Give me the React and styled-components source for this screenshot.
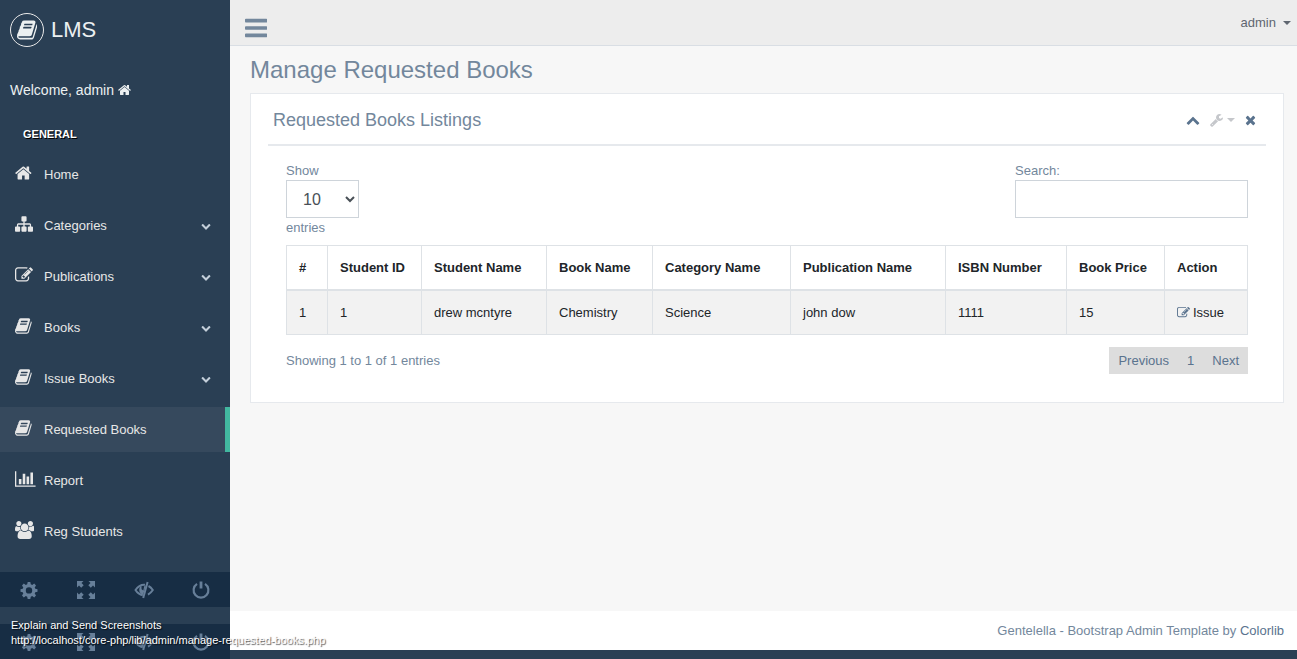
import React from "react";
import styled, { createGlobalStyle, css } from "styled-components";

const color = {
  navy: "#2a3f54",
  navyDark: "#172d44",
  slate: "#73879c",
  link: "#5a738e",
  light: "#ecf0f1",
  line: "#dee2e6",
};

const GlobalStyle = createGlobalStyle`
  *, *::before, *::after { box-sizing: border-box; }
  body {
    margin: 0;
    background: ${color.navy};
    color: ${color.slate};
    font-family: "Liberation Sans", Arial, sans-serif;
    font-size: 13px;
    line-height: 20px;
  }
  a { color: inherit; text-decoration: none; }
  button, input, select { font: inherit; color: inherit; }
  h1, h2, h3, p, ul { margin: 0; padding: 0; font-weight: 400; }
`;

const ICONS = {
  home: ["64 0 1664 1792", "M1472 992v480q0 26-19 45t-45 19h-384v-384h-256v384h-384q-26 0-45-19t-19-45v-480q0-1 .5-3t.5-3l575-474 575 474q1 2 1 6zm223-69l-62 74q-8 9-21 11h-3q-13 0-21-7l-692-577-692 577q-12 8-24 7-13-2-21-11l-62-74q-8-10-7-23.5t11-21.5l719-599q32-26 76-26t76 26l244 204v-195q0-14 9-23t23-9h192q14 0 23 9t9 23v408l219 182q10 8 11 21.5t-7 23.5z"],
  book: ["64 0 1664 1792", "M1703 478q40 57 18 129l-275 906q-19 64-76.5 107.5t-122.5 43.5h-923q-77 0-148.5-53.5t-99.5-131.5q-24-67-2-127 0-4 3-27t4-37q1-8-3-21.5t-3-19.5q2-11 8-21t16.5-23.5 16.5-23.5q23-38 45-91.5t30-91.5q3-10 .5-30t-.5-28q3-11 17-28t17-23q21-36 42-92t25-90q1-9-2.5-32t.5-28q4-13 22-30.5t22-22.5q19-26 42.5-84.5t27.5-96.5q1-8-3-25.5t-2-26.5q2-8 9-18t18-23 17-21q8-12 16.5-30.5t15-35 16-36 19.5-32 26.5-23.5 36-11.5 47.5 5.5l-1 3q38-9 51-9h761q74 0 114 56t18 130l-274 906q-36 119-71.5 153.5t-128.5 34.5h-869q-27 0-38 15-11 16-1 43 24 70 144 70h923q29 0 56-15.5t35-41.5l300-987q7-22 5-57 38 15 59 43zm-1064 2q-4 13 2 22.5t20 9.5h608q13 0 25.5-9.5t16.5-22.5l21-64q4-13-2-22.5t-20-9.5h-608q-13 0-25.5 9.5t-16.5 22.5zm-83 256q-4 13 2 22.5t20 9.5h608q13 0 25.5-9.5t16.5-22.5l21-64q4-13-2-22.5t-20-9.5h-608q-13 0-25.5 9.5t-16.5 22.5z"],
  edit: ["0 0 1792 1792", "M888 1184l116-116-152-152-116 116v56h96v96h56zm440-720q-16-16-33 1l-350 350q-17 17-1 33t33-1l350-350q17-17 1-33zm80 594v190q0 119-84.5 203.5t-203.5 84.5h-832q-119 0-203.5-84.5t-84.5-203.5v-832q0-119 84.5-203.5t203.5-84.5h832q63 0 117 25 15 7 18 23 3 17-9 29l-49 49q-14 14-32 8-23-6-45-6h-832q-66 0-113 47t-47 113v832q0 66 47 113t113 47h832q66 0 113-47t47-113v-126q0-13 9-22l64-64q15-15 35-7t20 29zm-96-738l288 288-672 672h-288v-288zm444 132l-92 92-288-288 92-92q28-28 68-28t68 28l152 152q28 28 28 68t-28 68z"],
  sitemap: ["0 0 1792 1792", "M1792 1248v320q0 40-28 68t-68 28h-320q-40 0-68-28t-28-68v-320q0-40 28-68t68-28h96v-192h-512v192h96q40 0 68 28t28 68v320q0 40-28 68t-68 28h-320q-40 0-68-28t-28-68v-320q0-40 28-68t68-28h96v-192h-512v192h96q40 0 68 28t28 68v320q0 40-28 68t-68 28h-320q-40 0-68-28t-28-68v-320q0-40 28-68t68-28h96v-192q0-52 38-90t90-38h512v-192h-96q-40 0-68-28t-28-68v-320q0-40 28-68t68-28h320q40 0 68 28t28 68v320q0 40-28 68t-68 28h-96v192h512q52 0 90 38t38 90v192h96q40 0 68 28t28 68z"],
  chart: ["0 0 2048 1792", "M640 896v512h-256v-512h256zm384-512v1024h-256v-1024h256zm1024 1152v128h-2048v-1536h128v1408h1920zm-640-896v768h-256v-768h256zm384-384v1152h-256v-1152h256z"],
  users: ["-64 0 1920 1792", "M529 896q-162 5-265 128h-134q-82 0-138-40.5t-56-118.5q0-353 124-353 6 0 43.5 21t97.5 42.5 119 21.5q67 0 133-23-5 37-5 66 0 159 90 290zm1071 637q0 120-73 189.5t-194 69.5h-874q-121 0-194-69.5t-73-189.5q0-53 3.5-103.5t14-109 26.5-108.5 43-97.5 62-81 85.5-53.5 111.5-20q10 0 43 21.5t73 48 107 48 135 21.5 135-21.5 107-48 73-48 43-21.5q61 0 111.5 20t85.5 53.5 62 81 43 97.5 26.5 108.5 14 109 3.5 103.5zm-1024-1277q0 106-75 181t-181 75-181-75-75-181 75-181 181-75 181 75 75 181zm704 384q0 159-112.5 271.5t-271.5 112.5-271.5-112.5-112.5-271.5 112.5-271.5 271.5-112.5 271.5 112.5 112.5 271.5zm576 225q0 78-56 118.5t-138 40.5h-134q-103-123-265-128 90-131 90-290 0-29-5-66 66 23 133 23 59 0 119-21.5t97.5-42.5 43.5-21q124 0 124 353zm-128-609q0 106-75 181t-181 75-181-75-75-181 75-181 181-75 181 75 75 181z"],
  chevronDown: ["0 0 1792 1792", "M1683 808l-742 741q-19 19-45 19t-45-19l-742-741q-19-19-19-45.5t19-45.5l166-165q19-19 45-19t45 19l531 531 531-531q19-19 45-19t45 19l166 165q19 19 19 45.5t-19 45.5z"],
  chevronUp: ["0 0 1792 1792", "M1683 1331l-166 165q-19 19-45 19t-45-19l-531-531-531 531q-19 19-45 19t-45-19l-166-165q-19-19-19-45.5t19-45.5l742-741q19-19 45-19t45 19l742 741q19 19 19 45.5t-19 45.5z"],
  wrench: ["64 0 1664 1792", "M448 1472q0-26-19-45t-45-19-45 19-19 45 19 45 45 19 45-19 19-45zm644-420l-682 682q-37 37-90 37-52 0-91-37l-106-108q-38-36-38-90 0-53 38-91l681-681q39 98 114.5 173.5t173.5 114.5zm634-435q0 39-23 106-47 134-164.5 217.5t-258.5 83.5q-185 0-316.5-131.5t-131.5-316.5 131.5-316.5 316.5-131.5q58 0 121.5 16.5t107.5 46.5q16 11 16 28t-16 28l-293 169v224l193 107q5-3 79-48.5t135.5-81 70.5-35.5q15 0 23.5 10t8.5 25z"],
  close: ["192 0 1408 1792", "M1490 1322q0 40-28 68l-136 136q-28 28-68 28t-68-28l-294-294-294 294q-28 28-68 28t-68-28l-136-136q-28-28-28-68t28-68l294-294-294-294q-28-28-28-68t28-68l136-136q28-28 68-28t68 28l294 294 294-294q28-28 68-28t68 28l136 136q28 28 28 68t-28 68l-294 294 294 294q28 28 28 68z"],
  bars: ["128 0 1536 1792", "M1664 1344v128q0 26-19 45t-45 19h-1408q-26 0-45-19t-19-45v-128q0-26 19-45t45-19h1408q26 0 45 19t19 45zm0-512v128q0 26-19 45t-45 19h-1408q-26 0-45-19t-19-45v-128q0-26 19-45t45-19h1408q26 0 45 19t19 45zm0-512v128q0 26-19 45t-45 19h-1408q-26 0-45-19t-19-45v-128q0-26 19-45t45-19h1408q26 0 45 19t19 45z"],
  caret: ["0 0 8 4", "M0 0h8l-4 4z"],
  cog: ["0 0 18 18", "M7.700 1h2.600l.5 2.300 1.400.6 2-1.300 1.800 1.800-1.300 2 .6 1.400 2.200.5v2.400l-2.200.5-.6 1.400 1.300 2-1.800 1.800-2-1.300-1.400.6-.5 2.300h-2.600l-.5-2.300-1.400-.6-2 1.300-1.800-1.800 1.300-2-.6-1.400-2.200-.5v-2.400l2.200-.5.6-1.400-1.300-2 1.800-1.800 2 1.300 1.400-.6zM9 6.200a3.200 3.200 0 1 0 0 6.400a3.200 3.200 0 1 0 0-6.400z"],
  expand: ["0 0 18 18", "M0 0h6.500l-2 2 2.200 2.200-2.500 2.500-2.200-2.200-2 2zM18 0v6.500l-2-2-2.200 2.200-2.500-2.500 2.200-2.200-2-2zM0 18v-6.500l2 2 2.200-2.200 2.500 2.500-2.200 2.200 2 2zM18 18h-6.500l2-2-2.200-2.200 2.500-2.500 2.200 2.200 2-2z"],
};

const Svg = styled.svg`
  display: block;
  flex: none;
  fill: currentColor;
`;

// Font-style sizing: the height is the em size, the width follows the glyph.
function Icon({ name, size }) {
  const [viewBox, d] = ICONS[name];
  const [, , w, h] = viewBox.split(" ").map(Number);
  return (
    <Svg viewBox={viewBox} height={size} width={(size * w) / h} aria-hidden="true">
      <path d={d} fillRule={name === "cog" ? "evenodd" : "nonzero"} />
    </Svg>
  );
}

function EyeCloseIcon() {
  return (
    <Svg viewBox="0 0 20 18" width="20" height="18" aria-hidden="true">
      <g fill="none" stroke="currentColor" strokeWidth="2">
        <path d="M11 3.800C6.500 3.400 3.500 6 1.500 9c1.700 2.700 4 4.500 7.300 5.200" />
        <path d="M14.500 5c2 1 3.300 2.500 4.300 4-1.300 2-2.800 3.600-4.800 4.700" />
        <path d="M13.600 1L9.200 17" />
      </g>
      <path d="M11.800 4.500L9.200 13.600C6.500 13 5 11 5.200 8.500c.2-1.900 1-3.200 2.200-4l.2 3.800 1.700 1.200 1-4.500z" />
    </Svg>
  );
}

function PowerIcon() {
  return (
    <Svg viewBox="0 0 18 18" width="18" height="18" aria-hidden="true">
      <g fill="none" stroke="currentColor">
        <path strokeWidth="2.200" d="M5 2.900a7.400 7.400 0 1 0 8 0" />
        <path strokeWidth="2.800" d="M9 .5v7" />
      </g>
    </Svg>
  );
}

const Page = styled.div`
  position: relative;
  display: flex;
  min-height: 100vh;
`;

const Sidebar = styled.aside`
  display: flex;
  flex-direction: column;
  flex: none;
  width: 230px;
  background: ${color.navy};
  color: ${color.light};
`;

const Brand = styled.a`
  display: flex;
  align-items: center;
  gap: 7px;
  height: 60px;
  padding: 0 10px;
  font-size: 22px;
`;

const BrandMark = styled.span`
  display: grid;
  place-items: center;
  width: 34px;
  height: 34px;
  border: 1px solid #eaeaea;
  border-radius: 50%;
`;

const Welcome = styled.p`
  display: flex;
  align-items: center;
  gap: 4px;
  padding: 20px 10px;
  font-size: 14px;
`;

const SectionTitle = styled.h3`
  padding: 4px 23px 8px;
  color: #fff;
  font-size: 11px;
  font-weight: 700;
  text-shadow: 1px 1px #000;
`;

const Menu = styled.ul`
  display: flex;
  flex-direction: column;
  gap: 6px;
  list-style: none;
`;

const menuEntry = css`
  display: flex;
  align-items: center;
  width: 100%;
  height: 45px;
  padding: 0 19px 0 15px;
  border: 0;
  background: none;
  color: #e7e7e7;
  font-size: 13px;
  text-align: left;
  cursor: pointer;
`;

const MenuLink = styled.a`
  ${menuEntry}
  ${(p) =>
    p.$active &&
    css`
      background: #36495d;
      border-right: 5px solid #42b8a0;
    `}
`;

const MenuToggle = styled.button`
  ${menuEntry}
`;

const MenuIcon = styled.span`
  width: 29px;
  padding-bottom: 3px;
`;

const MenuLabel = styled.span`
  flex: 1;
`;

const MenuArrow = styled.span`
  color: #c4cfda;
`;

const SidebarBar = styled.div`
  display: grid;
  grid-template-columns: repeat(4, 1fr);
  height: 35px;
  margin-top: ${(p) => (p.$docked ? "auto" : "18px")};
  background: ${color.navyDark};
`;

const BarButton = styled.button`
  display: grid;
  place-items: center;
  padding: 0;
  border: 0;
  background: none;
  color: #677f99;
  cursor: pointer;
`;

const Column = styled.div`
  display: flex;
  flex: 1;
  flex-direction: column;
  min-width: 0;
  margin-bottom: 9px;
`;

const TopBar = styled.header`
  display: flex;
  align-items: center;
  justify-content: space-between;
  height: 46px;
  padding: 0 6px 0 15px;
  border-bottom: 1px solid #d9dee4;
  background: #ededed;
`;

const MenuButton = styled.button`
  padding: 10px 0 0;
  border: 0;
  background: none;
  color: ${color.slate};
  cursor: pointer;
`;

const UserButton = styled.button`
  display: flex;
  align-items: center;
  gap: 7px;
  padding: 0;
  border: 0;
  background: none;
  color: #5f6670;
  cursor: pointer;
`;

const Content = styled.main`
  flex: 1;
  padding: 10px 13px 20px 20px;
  background: #f7f7f7;
`;

const PageTitle = styled.h1`
  margin-bottom: 9px;
  font-size: 24px;
  line-height: 28px;
`;

const Panel = styled.section`
  padding: 10px 17px 28px;
  border: 1px solid #e6e9ed;
  background: #fff;
`;

const PanelHead = styled.div`
  display: flex;
  align-items: center;
  justify-content: space-between;
  height: 42px;
  padding: 0 10px 8px 5px;
  border-bottom: 2px solid #e6e9ed;
`;

const PanelTitle = styled.h2`
  font-size: 18px;
`;

const Tools = styled.div`
  display: flex;
  align-items: center;
  gap: 10px;
`;

const ToolButton = styled.button`
  display: flex;
  align-items: center;
  gap: 4px;
  padding: 0;
  border: 0;
  background: none;
  color: ${(p) => (p.$muted ? "#c5c7cb" : color.link)};
  cursor: pointer;
`;

const PanelBody = styled.div`
  padding: 15px 18px 0;
`;

const Controls = styled.div`
  display: flex;
  align-items: flex-start;
  justify-content: space-between;
  margin-bottom: 8px;
`;

const Field = styled.label`
  display: flex;
  flex-direction: column;
  align-items: flex-start;
  line-height: 19px;
`;

const controlBox = css`
  height: 38px;
  border: 1px solid #ced4da;
  border-radius: 0;
  background: #fff;
  color: #495057;
  font-size: 16px;
`;

const LengthSelect = styled.select`
  ${controlBox}
  width: 73px;
  padding: 0 0 0 12px;
`;

const SearchInput = styled.input`
  ${controlBox}
  width: 233px;
  padding: 6px 12px;
`;

const Table = styled.table`
  width: 100%;
  table-layout: fixed;
  border-collapse: collapse;
  color: #212529;
  line-height: 19px;
`;

const Th = styled.th`
  width: ${(p) => p.$w}px;
  padding: 12px;
  border: 1px solid ${color.line};
  border-bottom-width: 2px;
  text-align: left;
  white-space: nowrap;
`;

const Td = styled.td`
  padding: 12px;
  border: 1px solid ${color.line};
  background: #f2f2f2;
`;

const IssueLink = styled.a`
  display: flex;
  align-items: center;
  gap: 3px;

  svg {
    color: ${color.link};
  }
`;

const TableFoot = styled.div`
  display: flex;
  align-items: center;
  justify-content: space-between;
  margin-top: 12px;
`;

const Pager = styled.nav`
  display: flex;
  background: #ddd;
`;

const PageButton = styled.button`
  height: 27px;
  padding: 0 9px;
  border: 0;
  background: none;
  color: ${color.link};
  cursor: pointer;
`;

const Footer = styled.footer`
  height: 39px;
  padding: 10px 13px;
  background: #fff;
  text-align: right;

  a {
    color: ${color.link};
  }
`;

const Stamp = styled.div`
  position: absolute;
  bottom: 11px;
  left: 11px;
  color: #fff;
  font-size: 11px;
  line-height: 15px;
  text-shadow: 1px 1px 1px rgba(0, 0, 0, 0.7);
  pointer-events: none;
`;

const MENU = [
  { label: "Home", icon: "home" },
  { label: "Categories", icon: "sitemap", nested: true },
  { label: "Publications", icon: "edit", nested: true },
  { label: "Books", icon: "book", nested: true },
  { label: "Issue Books", icon: "book", nested: true },
  { label: "Requested Books", icon: "book", active: true },
  { label: "Report", icon: "chart" },
  { label: "Reg Students", icon: "users" },
];

const COLUMNS = [
  ["#", 41],
  ["Student ID", 94],
  ["Student Name", 125],
  ["Book Name", 106],
  ["Category Name", 138],
  ["Publication Name", 155],
  ["ISBN Number", 121],
  ["Book Price", 98],
  ["Action", 83],
];

const ROWS = [["1", "1", "drew mcntyre", "Chemistry", "Science", "john dow", "1111", "15"]];

function MenuItem({ label, icon, nested, active }) {
  const Entry = nested ? MenuToggle : MenuLink;
  const props = nested ? { type: "button", "aria-expanded": false } : { href: "#", $active: active };
  return (
    <li>
      <Entry {...props}>
        <MenuIcon>
          <Icon name={icon} size={18} />
        </MenuIcon>
        <MenuLabel>{label}</MenuLabel>
        {nested && (
          <MenuArrow>
            <Icon name="chevronDown" size={10} />
          </MenuArrow>
        )}
      </Entry>
    </li>
  );
}

function QuickBar({ docked }) {
  return (
    <SidebarBar $docked={docked}>
      <BarButton type="button" aria-label="Settings">
        <Icon name="cog" size={18} />
      </BarButton>
      <BarButton type="button" aria-label="Full screen">
        <Icon name="expand" size={18} />
      </BarButton>
      <BarButton type="button" aria-label="Lock">
        <EyeCloseIcon />
      </BarButton>
      <BarButton type="button" aria-label="Logout">
        <PowerIcon />
      </BarButton>
    </SidebarBar>
  );
}

export default function App() {
  return (
    <>
      <GlobalStyle />
      <Page>
        <Sidebar>
          <Brand href="#">
            <BrandMark>
              <Icon name="book" size={22} />
            </BrandMark>
            LMS
          </Brand>
          <Welcome>
            Welcome, admin <Icon name="home" size={14} />
          </Welcome>
          <SectionTitle>GENERAL</SectionTitle>
          <Menu>
            {MENU.map((item) => (
              <MenuItem key={item.label} {...item} />
            ))}
          </Menu>
          <QuickBar />
          <QuickBar docked />
        </Sidebar>

        <Column>
          <TopBar>
            <MenuButton type="button" aria-label="Toggle menu">
              <Icon name="bars" size={26} />
            </MenuButton>
            <UserButton type="button">
              admin <Icon name="caret" size={4} />
            </UserButton>
          </TopBar>

          <Content>
            <PageTitle>Manage Requested Books</PageTitle>
            <Panel>
              <PanelHead>
                <PanelTitle>Requested Books Listings</PanelTitle>
                <Tools>
                  <ToolButton type="button" aria-label="Collapse">
                    <Icon name="chevronUp" size={14} />
                  </ToolButton>
                  <ToolButton type="button" aria-label="Options" $muted>
                    <Icon name="wrench" size={14} />
                    <Icon name="caret" size={4} />
                  </ToolButton>
                  <ToolButton type="button" aria-label="Close">
                    <Icon name="close" size={14} />
                  </ToolButton>
                </Tools>
              </PanelHead>
              <PanelBody>
                <Controls>
                  <Field>
                    Show
                    <LengthSelect defaultValue="10">
                      <option>10</option>
                      <option>25</option>
                      <option>50</option>
                      <option>100</option>
                    </LengthSelect>
                    entries
                  </Field>
                  <Field>
                    Search:
                    <SearchInput type="search" />
                  </Field>
                </Controls>
                <Table>
                  <thead>
                    <tr>
                      {COLUMNS.map(([name, width]) => (
                        <Th key={name} $w={width} scope="col">
                          {name}
                        </Th>
                      ))}
                    </tr>
                  </thead>
                  <tbody>
                    {ROWS.map((row) => (
                      <tr key={row[0]}>
                        {row.map((value, i) => (
                          <Td key={i}>{value}</Td>
                        ))}
                        <Td>
                          <IssueLink href="#">
                            <Icon name="edit" size={13} />
                            Issue
                          </IssueLink>
                        </Td>
                      </tr>
                    ))}
                  </tbody>
                </Table>
                <TableFoot>
                  <p>Showing 1 to 1 of 1 entries</p>
                  <Pager aria-label="Table pages">
                    <PageButton type="button">Previous</PageButton>
                    <PageButton type="button">1</PageButton>
                    <PageButton type="button">Next</PageButton>
                  </Pager>
                </TableFoot>
              </PanelBody>
            </Panel>
          </Content>

          <Footer>
            Gentelella - Bootstrap Admin Template by <a href="#">Colorlib</a>
          </Footer>
        </Column>

        <Stamp>
          Explain and Send Screenshots
          <br />
          http://localhost/core-php/lib/admin/manage-requested-books.php
        </Stamp>
      </Page>
    </>
  );
}
